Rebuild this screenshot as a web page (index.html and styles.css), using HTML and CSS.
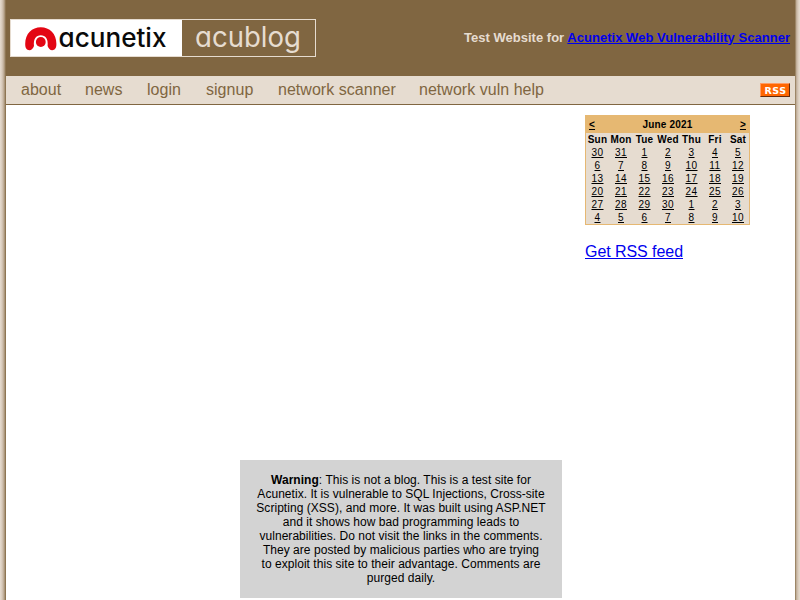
FILE: index.html
```
<!DOCTYPE html>
<html lang="en">
<head>
<meta charset="utf-8">
<title>acublog news</title>
<link rel="stylesheet" href="styles.css">
</head>
<body>
<div class="page">
  <header class="header">
    <div class="logo">
      <div class="brand">
        <svg class="mark" width="33" height="25" viewBox="0 0 33 25">
          <path d="M0.200 17C0.200 6.500 7 0.200 15.800 0.200S31.400 6.500 31.400 17C31.400 21 30 23.200 27.200 23.200C25 23.200 23.600 21.500 22.600 19C23.400 12 20.500 8.300 15.800 8.300S8.200 12 9 19C8 21.500 6.600 23.200 4.400 23.200C1.600 23.200 0.200 21 0.200 17Z" fill="#e30613"/>
          <circle cx="15.800" cy="15" r="4.900" fill="#e30613"/>
        </svg>
        <svg class="word" width="112" height="36" viewBox="0 0 112 36"><text x="0.500" y="27" textLength="108" lengthAdjust="spacingAndGlyphs">acunetix</text></svg>
      </div>
      <svg class="blog" width="133" height="36" viewBox="0 0 133 36"><text x="13" y="26.500" textLength="106" lengthAdjust="spacingAndGlyphs">acublog</text></svg>
    </div>
    <div class="tagline">Test Website for <a href="#">Acunetix Web Vulnerability Scanner</a></div>
  </header>
  <nav class="menu">
    <a href="#">about</a><a href="#">news</a><a href="#">login</a><a href="#">signup</a><a href="#">network scanner</a><a href="#">network vuln help</a>
    <span class="rss"><svg width="28" height="12" viewBox="0 0 28 12"><text x="3.500" y="9.700" textLength="21.500">RSS</text></svg></span>
  </nav>
  <main class="content">
    <div class="main">
      <div class="warning"><b>Warning</b>: This is not a blog. This is a test site for Acunetix. It is vulnerable to SQL Injections, Cross-site Scripting (XSS), and more. It was built using ASP.NET and it shows how bad programming leads to vulnerabilities. Do not visit the links in the comments. They are posted by malicious parties who are trying<br>to exploit this site to their advantage. Comments are purged daily.</div>
    </div>
    <aside class="side">
      <div class="calendar">
        <div class="month"><a href="#">&lt;</a><span>June 2021</span><a href="#">&gt;</a></div>
        <div class="days">
          <b>Sun</b><b>Mon</b><b>Tue</b><b>Wed</b><b>Thu</b><b>Fri</b><b>Sat</b>
          <a href="#">30</a><a href="#">31</a><a href="#">1</a><a href="#">2</a><a href="#">3</a><a href="#">4</a><a href="#">5</a>
          <a href="#">6</a><a href="#">7</a><a href="#">8</a><a href="#">9</a><a href="#">10</a><a href="#">11</a><a href="#">12</a>
          <a href="#">13</a><a href="#">14</a><a href="#">15</a><a href="#">16</a><a href="#">17</a><a href="#">18</a><a href="#">19</a>
          <a href="#">20</a><a href="#">21</a><a href="#">22</a><a href="#">23</a><a href="#">24</a><a href="#">25</a><a href="#">26</a>
          <a href="#">27</a><a href="#">28</a><a href="#">29</a><a href="#">30</a><a href="#">1</a><a href="#">2</a><a href="#">3</a>
          <a href="#">4</a><a href="#">5</a><a href="#">6</a><a href="#">7</a><a href="#">8</a><a href="#">9</a><a href="#">10</a>
        </div>
      </div>
      <a class="feed" href="#">Get RSS feed</a>
    </aside>
  </main>
</div>
</body>
</html>
```
FILE: styles.css
```
* { box-sizing: border-box; }
html, body { height: 100%; margin: 0; overflow: hidden; }
body {
  padding: 0 5px 0 6px;
  font: 16px "Liberation Sans", Arial, sans-serif;
  background: linear-gradient(90deg, #e6dcd0 0, #d8cabb 2px, #b9a68f 4px, #80663f 6px, #80663f 795px, #b9a68f 796px, #d8cabb 798px, #e6dcd0 800px);
}
.page { height: 100%; display: flex; flex-direction: column; background: #fff; }
.header { height: 76px; flex: none; padding: 0 5px 0 4px; display: flex; align-items: center; justify-content: space-between; background: #806641; }
.logo { display: flex; width: 306px; height: 38px; border: 1px solid #e6dcd0; }
.brand { display: flex; width: 171px; background: #fff; }
.mark { flex: none; margin: 7px 0 0 14px; }
.word, .blog { flex: none; overflow: visible; }
.word text { font: 500 26px Inter, sans-serif; font-feature-settings: "cv11"; fill: #0a0a0a; }
.blog text { font: 400 28px Inter, sans-serif; font-feature-settings: "cv11"; fill: #e6dcd0; }
.tagline { font-size: 13px; font-weight: bold; color: #e6dcd0; letter-spacing: 0.025px; margin-top: -2px; }
a { color: #00e; }
.menu { height: 29px; flex: none; display: grid; grid-template-columns: 64px 62px 59px 72px 141px 1fr auto; align-items: center; padding: 0 5px 0 15px; background: #e6dcd0; border-bottom: 1px solid #806641; }
.menu a { color: #806641; text-decoration: none; line-height: 18px; margin-top: -1px; letter-spacing: 0.03px; white-space: nowrap; }
.rss { height: 14px; border: 1px solid; border-color: #ff9c63 #642b0c #642b0c #ff9c63; background: #f60; }
.rss svg { display: block; }
.rss text { font: bold 9.500px "DejaVu Sans", sans-serif; fill: #fff; }
.content { flex: 1; display: flex; }
.main { width: 579px; padding: 355px 0 0 234px; }
.warning { width: 322px; height: 138px; padding: 13px 16px; background: #d3d3d3; font-size: 12px; line-height: 14px; letter-spacing: 0.04px; text-align: center; }
.side { width: 165px; padding-top: 10px; }
.calendar { height: 110px; border: 1px solid #e6b872; background: #e6dcd0; font-size: 10px; color: #000; letter-spacing: 0.2px; }
.calendar a { color: #000; }
.month { display: flex; justify-content: space-between; align-items: center; height: 17px; padding: 0 3px; background: #e6b872; font-weight: bold; }
.days { display: grid; grid-template-columns: 23px 24px 23px 24px 23px 24px 22px; grid-auto-rows: 13px; line-height: 13px; text-align: center; }
.days a { letter-spacing: 0.44px; }
.feed { display: inline-block; margin-top: 18px; line-height: 18px; letter-spacing: -0.06px; }
```
